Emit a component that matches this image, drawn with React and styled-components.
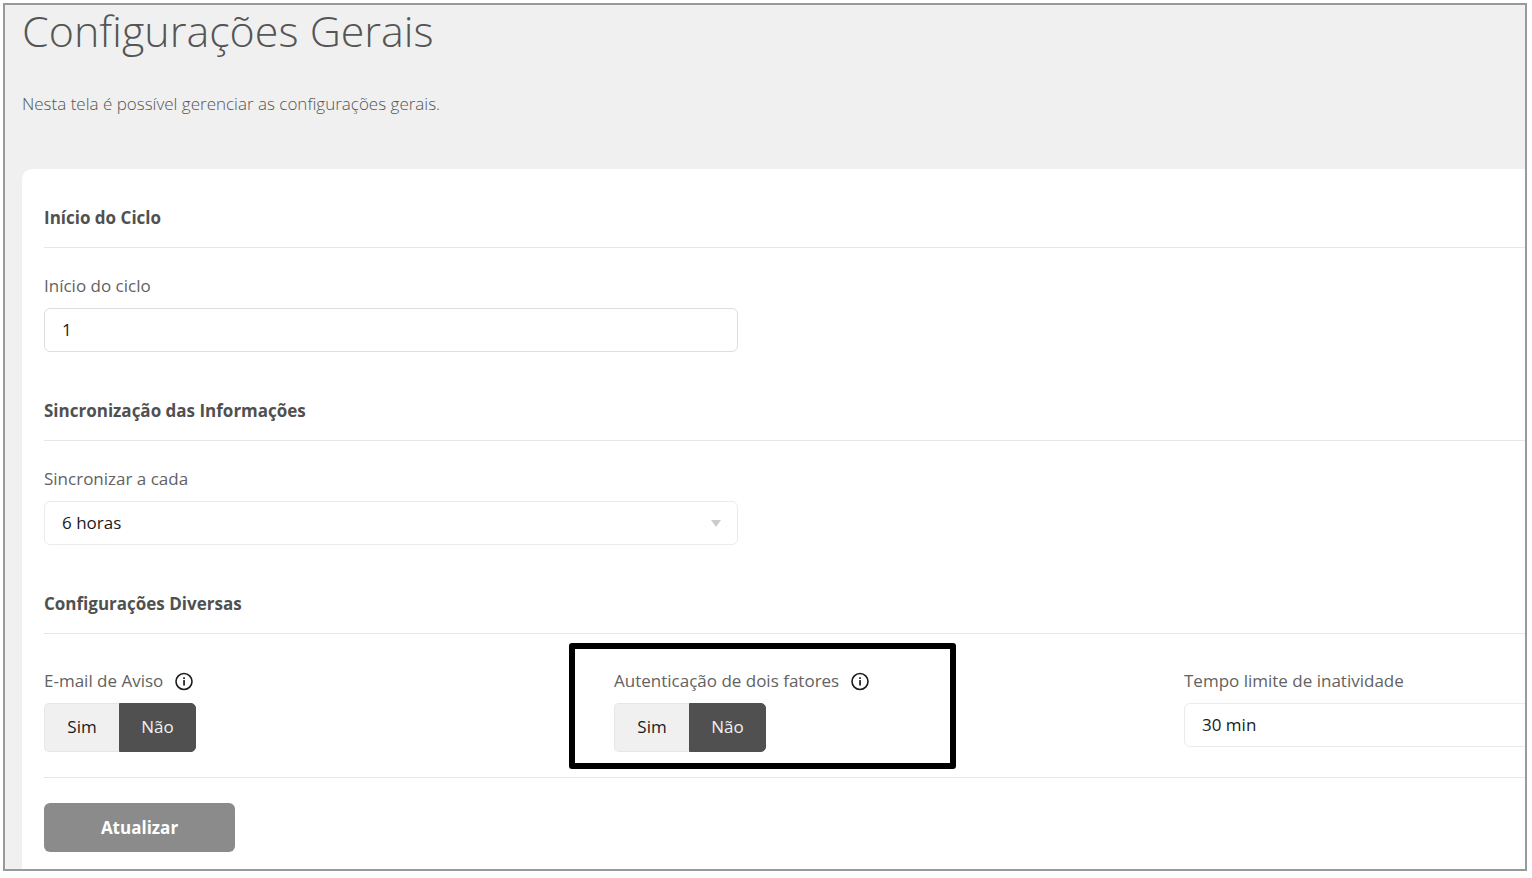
import React, { useState } from "react";
import styled, { createGlobalStyle } from "styled-components";

const GlobalStyle = createGlobalStyle`
  *, *::before, *::after { box-sizing: border-box; }
  body {
    margin: 0;
    background: #fff;
    color: #555;
    font-family: "Open Sans", "Noto Sans", sans-serif;
    font-size: 17px;
    line-height: 24px;
  }
  button, input, select { font: inherit; }
`;

const Frame = styled.main`
  margin: 3px 5px 6px 3px;
  padding-left: 17px;
  border: 2px solid #999;
  background: #f0f0f0;
`;

const PageHeader = styled.header`
  height: 164px;
`;

const Title = styled.h1`
  margin: 0;
  font-size: 43px;
  line-height: 52px;
  font-weight: 300;
`;

const Intro = styled.p`
  margin: 35px 0 0;
  font-weight: 300;
`;

const CardViewport = styled.div`
  overflow: hidden;
`;

const Card = styled.form`
  margin-right: -232px;
  padding: 37px 22px 17px;
  border-radius: 10px 0 0 0;
  background: #fff;
`;

const Section = styled.section`
  margin-bottom: ${(p) => (p.$last ? 0 : 47)}px;
`;

const SectionTitle = styled.h2`
  margin: 0;
  padding-bottom: 17px;
  border-bottom: 1px solid #e6e6e6;
  font-size: 17px;
  line-height: 24px;
  font-weight: 700;
  color: #505050;
`;

const Row = styled.div`
  display: grid;
  grid-template-columns: repeat(12, 1fr);
  column-gap: 19px;
  padding-top: ${(p) => (p.$roomy ? 35 : 26)}px;
`;

const Field = styled.div`
  position: relative;
  grid-column: span ${(p) => p.$span};
`;

const LabelRow = styled.div`
  display: flex;
  align-items: center;
  gap: 11px;
  margin-bottom: 10px;
  color: #626262;
`;

const Control = styled.input`
  display: block;
  width: 100%;
  height: 44px;
  padding: 0 17px ${(p) => (p.$soft ? 0 : 2)}px;
  border: 1px solid ${(p) => (p.$soft ? "#ebebeb" : "#dedede")};
  border-radius: 6px;
  background: #fff;
  color: #1a1a1a;
  appearance: none;
`;

const SelectWrap = styled.div`
  position: relative;
`;

const Caret = styled.svg`
  position: absolute;
  right: 17px;
  top: 19px;
  width: 10px;
  height: 7px;
  fill: #ccc;
  pointer-events: none;
`;

const InfoIcon = styled.svg`
  width: 20px;
  height: 20px;
  flex: none;
`;

const Toggle = styled.div`
  display: inline-flex;
  height: 49px;
  vertical-align: top;
`;

const ToggleButton = styled.button`
  width: ${(p) => (p.$end ? 77 : 75)}px;
  padding: 0 0 2px;
  border: 1px solid ${(p) => (p.$active ? "#505050" : "#e6e6e6")};
  border-right-width: ${(p) => (p.$end ? 1 : 0)}px;
  border-radius: ${(p) => (p.$end ? "0 5px 5px 0" : "5px 0 0 5px")};
  background: ${(p) => (p.$active ? "#505050" : "#f0f0f0")};
  color: ${(p) => (p.$active ? "#f0f0f0" : "#1a1a1a")};
`;

const Highlight = styled.div`
  position: absolute;
  top: -26px;
  left: -45px;
  width: 387px;
  height: 126px;
  border: 6px solid #000;
  border-radius: 3px;
  pointer-events: none;
`;

const Actions = styled.div`
  margin-top: 25px;
  padding-top: 25px;
  border-top: 1px solid #e6e6e6;
`;

const SubmitButton = styled.button`
  display: block;
  width: 191px;
  height: 49px;
  border: 0;
  border-radius: 6px;
  background: #8b8b8b;
  color: #fff;
  font-weight: 700;
`;

function Info() {
  return (
    <InfoIcon viewBox="0 0 20 20" aria-hidden="true">
      <circle cx="10" cy="10.5" r="8" fill="none" stroke="#1a1a1a" strokeWidth="1.6" />
      <rect x="9.2" y="9.1" width="1.7" height="5.4" fill="#1a1a1a" />
      <rect x="9.2" y="6.3" width="1.7" height="1.7" fill="#1a1a1a" />
    </InfoIcon>
  );
}

function Select({ id, options }) {
  return (
    <SelectWrap>
      <Control as="select" id={id} $soft>
        {options.map((o) => (
          <option key={o}>{o}</option>
        ))}
      </Control>
      <Caret viewBox="0 0 10 7" aria-hidden="true">
        <path d="M0 0H10L5 7Z" />
      </Caret>
    </SelectWrap>
  );
}

function YesNo({ id, label }) {
  const [on, setOn] = useState(false);
  return (
    <>
      <LabelRow>
        <span id={id}>{label}</span>
        <Info />
      </LabelRow>
      <Toggle role="group" aria-labelledby={id}>
        <ToggleButton type="button" aria-pressed={on} $active={on} onClick={() => setOn(true)}>
          Sim
        </ToggleButton>
        <ToggleButton type="button" aria-pressed={!on} $active={!on} $end onClick={() => setOn(false)}>
          Não
        </ToggleButton>
      </Toggle>
    </>
  );
}

export default function App() {
  return (
    <>
      <GlobalStyle />
      <Frame>
        <PageHeader>
          <Title>Configurações Gerais</Title>
          <Intro>Nesta tela é possível gerenciar as configurações gerais.</Intro>
        </PageHeader>
        <CardViewport>
          <Card onSubmit={(e) => e.preventDefault()}>
            <Section>
              <SectionTitle>Início do Ciclo</SectionTitle>
              <Row>
                <Field $span={5}>
                  <LabelRow as="label" htmlFor="cycle">Início do ciclo</LabelRow>
                  <Control id="cycle" type="text" defaultValue="1" />
                </Field>
              </Row>
            </Section>
            <Section>
              <SectionTitle>Sincronização das Informações</SectionTitle>
              <Row>
                <Field $span={5}>
                  <LabelRow as="label" htmlFor="sync">Sincronizar a cada</LabelRow>
                  <Select id="sync" options={["6 horas"]} />
                </Field>
              </Row>
            </Section>
            <Section $last>
              <SectionTitle>Configurações Diversas</SectionTitle>
              <Row $roomy>
                <Field $span={4}>
                  <YesNo id="warning-mail" label="E-mail de Aviso" />
                </Field>
                <Field $span={4}>
                  <YesNo id="two-factor" label="Autenticação de dois fatores" />
                  <Highlight />
                </Field>
                <Field $span={4}>
                  <LabelRow as="label" htmlFor="idle">Tempo limite de inatividade</LabelRow>
                  <Select id="idle" options={["30 min"]} />
                </Field>
              </Row>
            </Section>
            <Actions>
              <SubmitButton type="submit">Atualizar</SubmitButton>
            </Actions>
          </Card>
        </CardViewport>
      </Frame>
    </>
  );
}
